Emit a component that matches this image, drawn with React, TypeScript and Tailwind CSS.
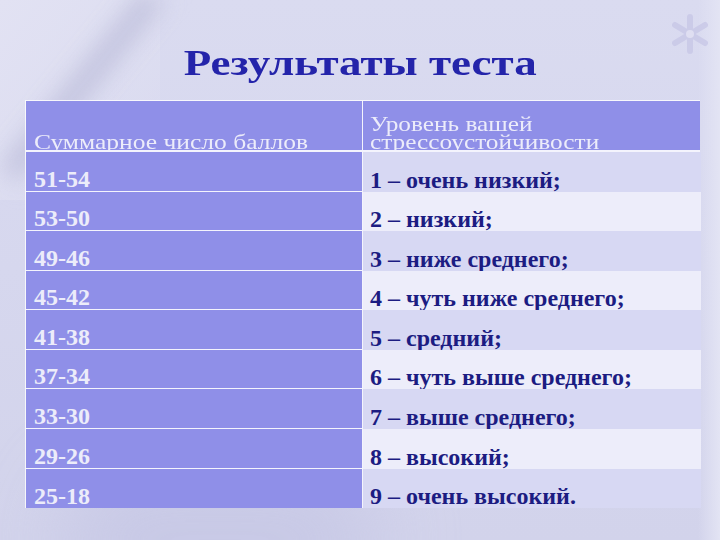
const rows = [
  { score: "51-54", level: "1 – очень низкий;" },
  { score: "53-50", level: "2 – низкий;" },
  { score: "49-46", level: "3 – ниже среднего;" },
  { score: "45-42", level: "4 – чуть ниже среднего;" },
  { score: "41-38", level: "5 – средний;" },
  { score: "37-34", level: "6 – чуть выше среднего;" },
  { score: "33-30", level: "7 – выше среднего;" },
  { score: "29-26", level: "8 – высокий;" },
  { score: "25-18", level: "9 – очень высокий." },
];

function Asterisk() {
  return (
    <svg width="40" height="44" viewBox="0 0 40 44" className="absolute left-[670px] top-[12px] opacity-70">
      <g stroke="#c6c5e6" strokeWidth="6" strokeLinecap="round">
        <line x1="20" y1="5" x2="20" y2="39" />
        <line x1="5" y1="13" x2="35" y2="31" />
        <line x1="5" y1="31" x2="35" y2="13" />
      </g>
      <circle cx="20" cy="22" r="4" fill="#e2e1f3" />
    </svg>
  );
}

export default function App() {
  return (
    <div className="relative w-[720px] h-[540px] overflow-hidden bg-gradient-to-b from-[#dadbf0] via-[#d6d7ee] to-[#d2d3eb] font-['Liberation_Serif',serif]">
      <div className="absolute left-0 top-0 w-[160px] h-[200px] bg-gradient-to-br from-[#e2e2f3] to-transparent" />
      <div className="absolute left-[70px] -top-[30px] w-[24px] h-[230px] rotate-[39deg] bg-[#c2c3de] blur-md" />
      <div className="absolute left-[60px] top-[470px] w-[320px] h-[140px] rounded-full bg-[#c4c5e4] blur-2xl opacity-70" />
      <div className="absolute right-0 top-0 w-[22px] h-[540px] bg-gradient-to-r from-transparent to-[#e3e4f4]" />
      <Asterisk />

      <div className="relative pt-[45px]">
        <h1 className="text-center text-[36px] leading-none font-bold text-[#2424aa]">
          <span className="inline-block scale-x-[1.25]">Результаты теста</span>
        </h1>

        <div className="ml-[25px] mt-[19px] w-[675px] h-[408px] flex flex-col border-t border-l border-white/80">
          <div className="h-[51px] grid grid-cols-[337px_338px] border-b-2 border-white/90 bg-[#8f8fe8]">
            <div className="flex items-end overflow-hidden border-r border-white/90 pl-[8px]">
              <span className="inline-block origin-left scale-x-[1.16] text-[22px] leading-none text-[#ececfa] -mb-[3px] whitespace-nowrap">
                Суммарное число баллов
              </span>
            </div>
            <div className="flex items-end overflow-hidden pl-[7px]">
              <span className="inline-block origin-left scale-x-[1.15] text-[22px] leading-[18px] text-[#ececfa] -mb-[1px] whitespace-nowrap">
                Уровень вашей
                <br />
                стрессоустойчивости
              </span>
            </div>
          </div>

          {rows.map((r, i) => (
            <div key={r.score} className="flex-1 grid grid-cols-[337px_338px]">
              <div
                className={`flex items-end bg-[#8f8fe8] border-r border-white/90 pl-[8px] ${i < rows.length - 1 ? "border-b border-white/80" : ""}`}
              >
                <span className="text-[24px] leading-none font-bold text-[#ececfa]">{r.score}</span>
              </div>
              <div className={`flex items-end pl-[7px] ${i % 2 === 0 ? "bg-[#d7d8f3]" : "bg-[#ededfa]"}`}>
                <span className="text-[24px] leading-none font-bold text-[#1c1c82]">{r.level}</span>
              </div>
            </div>
          ))}
        </div>
      </div>
    </div>
  );
}
